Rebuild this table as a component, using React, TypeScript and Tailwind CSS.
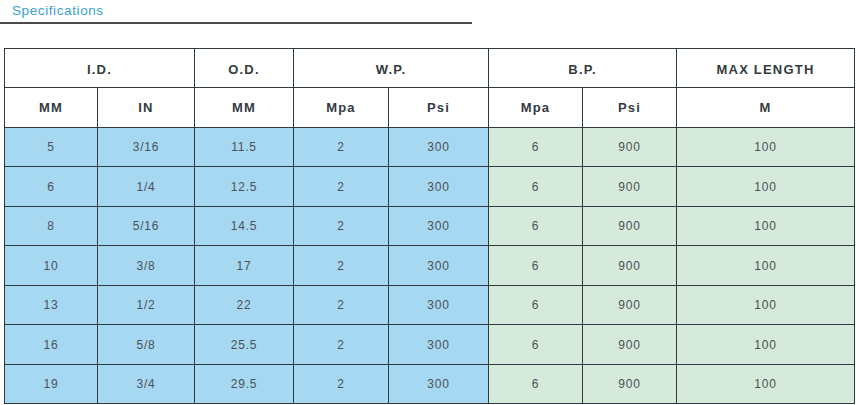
export default function App() {
  const rows = [
    ["5", "3/16", "11.5"],
    ["6", "1/4", "12.5"],
    ["8", "5/16", "14.5"],
    ["10", "3/8", "17"],
    ["13", "1/2", "22"],
    ["16", "5/8", "25.5"],
    ["19", "3/4", "29.5"],
  ];
  const widths = [93, 97, 99, 95, 100, 94, 94, 178];
  const cell = "border border-[#2f3b40] text-center";
  const blue = "bg-[#a6d8f2]";
  const green = "bg-[#d6eadb]";

  return (
    <main
      className="h-[405px] w-[856px] overflow-hidden bg-white text-[#3c4448]"
      style={{ fontFamily: '"Liberation Sans", Arial, sans-serif' }}
    >
      <div className="w-[472px] border-b-2 border-[#4a4a4a] pl-3 pt-[3px] pb-[3px]">
        <h2 className="text-[13.5px] leading-[16px] tracking-[0.6px] text-[#3a9fd0]">Specifications</h2>
      </div>

      <table className="ml-1 mt-[24px] w-[851px] table-fixed border-collapse">
        <colgroup>
          {widths.map((w, i) => (
            <col key={i} style={{ width: w }} />
          ))}
        </colgroup>
        <thead className="text-[13px] font-bold tracking-[1.2px] text-[#333b3f]">
          <tr className="h-[39px]">
            <th colSpan={2} className={`${cell} pt-[4px]`}>I.D.</th>
            <th className={`${cell} pt-[4px]`}>O.D.</th>
            <th colSpan={2} className={`${cell} pt-[4px]`}>W.P.</th>
            <th colSpan={2} className={`${cell} pt-[4px]`}>B.P.</th>
            <th className={`${cell} pt-[4px]`}>MAX LENGTH</th>
          </tr>
          <tr className="h-[40px]">
            <th className={cell}>MM</th>
            <th className={cell}>IN</th>
            <th className={cell}>MM</th>
            <th className={cell}>Mpa</th>
            <th className={cell}>Psi</th>
            <th className={cell}>Mpa</th>
            <th className={cell}>Psi</th>
            <th className={cell}>M</th>
          </tr>
        </thead>
        <tbody className="text-[12px] tracking-[0.8px] text-[#4a5256]">
          {rows.map((r, i) => (
            <tr key={r[0]} className={i % 2 === 0 ? "h-[39px]" : "h-[40px]"}>
              <td className={`${cell} ${blue}`}>{r[0]}</td>
              <td className={`${cell} ${blue}`}>{r[1]}</td>
              <td className={`${cell} ${blue}`}>{r[2]}</td>
              <td className={`${cell} ${blue}`}>2</td>
              <td className={`${cell} ${blue}`}>300</td>
              <td className={`${cell} ${green}`}>6</td>
              <td className={`${cell} ${green}`}>900</td>
              <td className={`${cell} ${green}`}>100</td>
            </tr>
          ))}
        </tbody>
      </table>
    </main>
  );
}
